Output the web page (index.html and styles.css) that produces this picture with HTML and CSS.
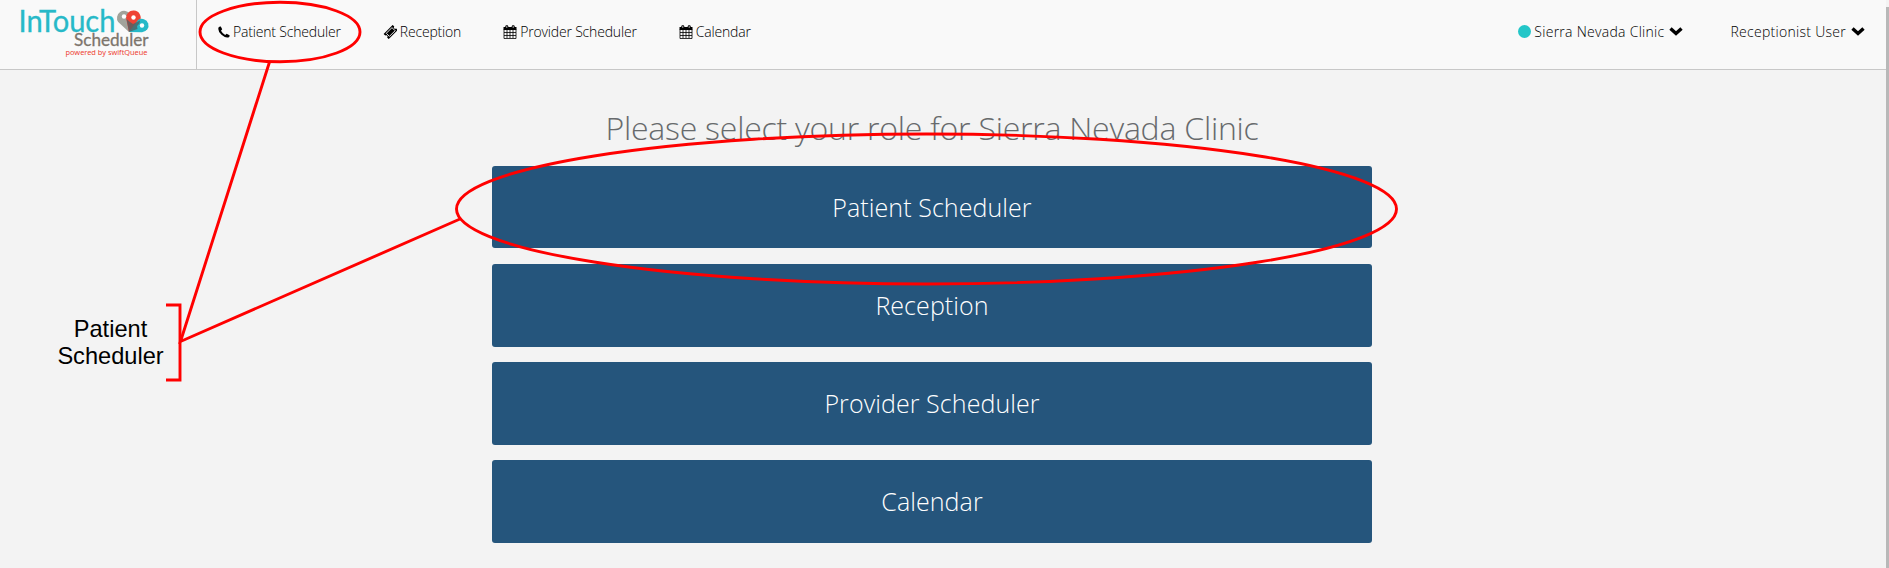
FILE: index.html
```html
<!DOCTYPE html>
<html lang="en">
<head>
<meta charset="utf-8">
<title>InTouch Scheduler</title>
<link rel="stylesheet" href="styles.css">
</head>
<body>
<svg width="0" height="0" class="defs">
  <symbol id="calendar" viewBox="0 0 14 14"><path d="M.5 2h13v3H.5z"/><path d="M1 4.500v9h12v-9M1 7.500h12M1 10.500h12M4 5v8M7 5v8M10 5v8" fill="none" stroke="#000" stroke-width=".8"/><rect x="2.400" y="0.200" width="2.800" height="3.600" rx="1"/><rect x="8.800" y="0.200" width="2.800" height="3.600" rx="1"/><path d="M3.800 1v2M10.200 1v2" stroke="#bbb" stroke-width=".9"/></symbol>
  <symbol id="chevron" viewBox="0 0 14 9"><path d="M1.500 1.500L7 6.500l5.500-5" fill="none" stroke="#000" stroke-width="3.400"/></symbol>
</svg>
<header class="topbar">
  <a class="brand">
    <svg width="196" height="69" viewBox="0 0 196 69">
      <text class="logo-main" x="18.500" y="32" textLength="97" lengthAdjust="spacingAndGlyphs">InTouch</text>
      <text class="logo-sub" x="74" y="45.500" textLength="74.500" lengthAdjust="spacingAndGlyphs">Scheduler</text>
      <text class="logo-tag" x="65.500" y="54.500" textLength="82" lengthAdjust="spacingAndGlyphs">powered by swiftQueue</text>
      <path d="M129 32L118.200 22A7 7 0 1 1 130 14z" fill="#a1a39b"/>
      <path d="M129 32L126.500 20A7.300 7.300 0 1 1 140 21z" fill="#ee4335"/>
      <path d="M129 32L138 20A6.700 6.700 0 1 1 142 32.200z" fill="#27b9c8"/>
      <path d="M129 32L126.500 19 130 22 133 24 140 20.500 139.500 23.500 137 26 137.500 29z" fill="#4d6264" opacity=".8"/>
      <circle cx="124" cy="16.500" r="2.200" fill="#fff"/><circle cx="133.500" cy="17.500" r="2.200" fill="#fff"/><circle cx="142" cy="25.500" r="2.200" fill="#fff"/>
    </svg>
  </a>
  <nav class="nav">
    <a class="item"><svg width="12" height="12" viewBox="0 0 12 12"><path d="M.5 1.500Q1.500.2 2.800.5L4.200 3.300 3 4.700Q4.500 7.500 7.200 9L8.600 7.800l2.900 1.400Q12 10 10.900 11.200 7.500 12.400 3.500 8.800-.5 5 .5 1.500z"/></svg><span>Patient Scheduler</span></a>
    <a class="item"><svg width="14" height="14" viewBox="0 0 14 14"><g transform="translate(.7 0) rotate(-45 7 7)"><path d="M.6 3.400h12.800v2.300a1.300 1.300 0 0 0 0 2.600v2.300H.6V8.300a1.300 1.300 0 0 0 0-2.600z"/><rect x="3" y="4.800" width="8" height="4.400" fill="none" stroke="#f9f9f9" stroke-width=".9"/></g></svg><span>Reception</span></a>
    <a class="item"><svg width="14" height="14"><use href="#calendar"/></svg><span>Provider Scheduler</span></a>
    <a class="item"><svg width="14" height="14"><use href="#calendar"/></svg><span>Calendar</span></a>
  </nav>
  <div class="account">
    <a class="item clinic"><i class="dot"></i><span>Sierra Nevada Clinic</span><svg width="14" height="9"><use href="#chevron"/></svg></a>
    <a class="item user"><span>Receptionist User</span><svg width="14" height="9"><use href="#chevron"/></svg></a>
  </div>
</header>
<main class="roles">
  <h1>Please select your role for Sierra Nevada Clinic</h1>
  <button>Patient Scheduler</button>
  <button>Reception</button>
  <button>Provider Scheduler</button>
  <button>Calendar</button>
</main>
<div class="scrollbar"></div>
<svg class="notes" width="1889" height="568" viewBox="0 0 1889 568">
  <g fill="none" stroke="#f00" stroke-width="2.900">
    <ellipse cx="280" cy="32" rx="80" ry="29.700"/>
    <ellipse cx="926.500" cy="209" rx="470" ry="75"/>
    <path d="M269.500 62L180.500 341.500 460 219"/>
    <path d="M166 305h14v75h-14"/>
  </g>
  <g class="note-text"><text x="110.500" y="336.500">Patient</text><text x="110.500" y="363.500">Scheduler</text></g>
</svg>
</body>
</html>
```
FILE: styles.css
```css
* { box-sizing: border-box; }
body {
  margin: 0;
  height: 568px;
  overflow: hidden;
  background: #f3f3f3;
  font-family: "Open Sans", sans-serif;
  font-weight: 300;
  color: #000;
}
.defs { position: absolute; }
.topbar {
  display: flex;
  height: 70px;
  width: 1886px;
  background: #f9f9f9;
  border-bottom: 1px solid #c8c8c8;
}
.brand { width: 197px; border-right: 1px solid #c8c8c8; }
.brand svg { display: block; }
.logo-main { font: 400 30px "Lato", sans-serif; fill: #27b9c8; stroke: #27b9c8; stroke-width: .3; }
.logo-sub { font: 400 17px "Lato", sans-serif; fill: #7d756c; stroke: #7d756c; stroke-width: .3; }
.logo-tag { font: 400 7.500px "Noto Sans", sans-serif; fill: #ee4335; }
.nav { display: flex; flex: 1; gap: 42px; padding-left: 21px; letter-spacing: -.18px; }
.item { display: flex; align-items: center; height: 63px; gap: 3px; font-size: 14px; white-space: nowrap; }
.account { display: flex; gap: 46px; padding-right: 21px; letter-spacing: .28px; }
.account .item svg { margin-left: 2px; }
.dot { width: 13px; height: 13px; border-radius: 50%; background: #23c6c8; }
.roles { display: flex; flex-direction: column; width: 880px; margin-left: 492px; gap: 15px; }
h1 { margin: 0; height: 81px; padding-top: 36px; font-size: 32px; line-height: 44px; font-weight: 300; letter-spacing: -.23px; color: #676a6c; text-align: center; white-space: nowrap; }
button {
  height: 83px;
  padding: 0 0 1px;
  border: 0;
  border-radius: 3px;
  background: #25557c;
  color: #fff;
  font: 300 25px "Open Sans", sans-serif;
  letter-spacing: .08px;
}
h1 + button { height: 82px; padding: 0; margin-bottom: 1px; }
.clinic { margin-right: 1px; }
.scrollbar { position: absolute; right: 0; top: 7px; width: 3px; height: 561px; background: #b8b8b8; }
.notes { position: absolute; left: 0; top: 0; pointer-events: none; }
.note-text { font: 400 23.600px "Liberation Sans", Arial, sans-serif; text-anchor: middle; }
```
